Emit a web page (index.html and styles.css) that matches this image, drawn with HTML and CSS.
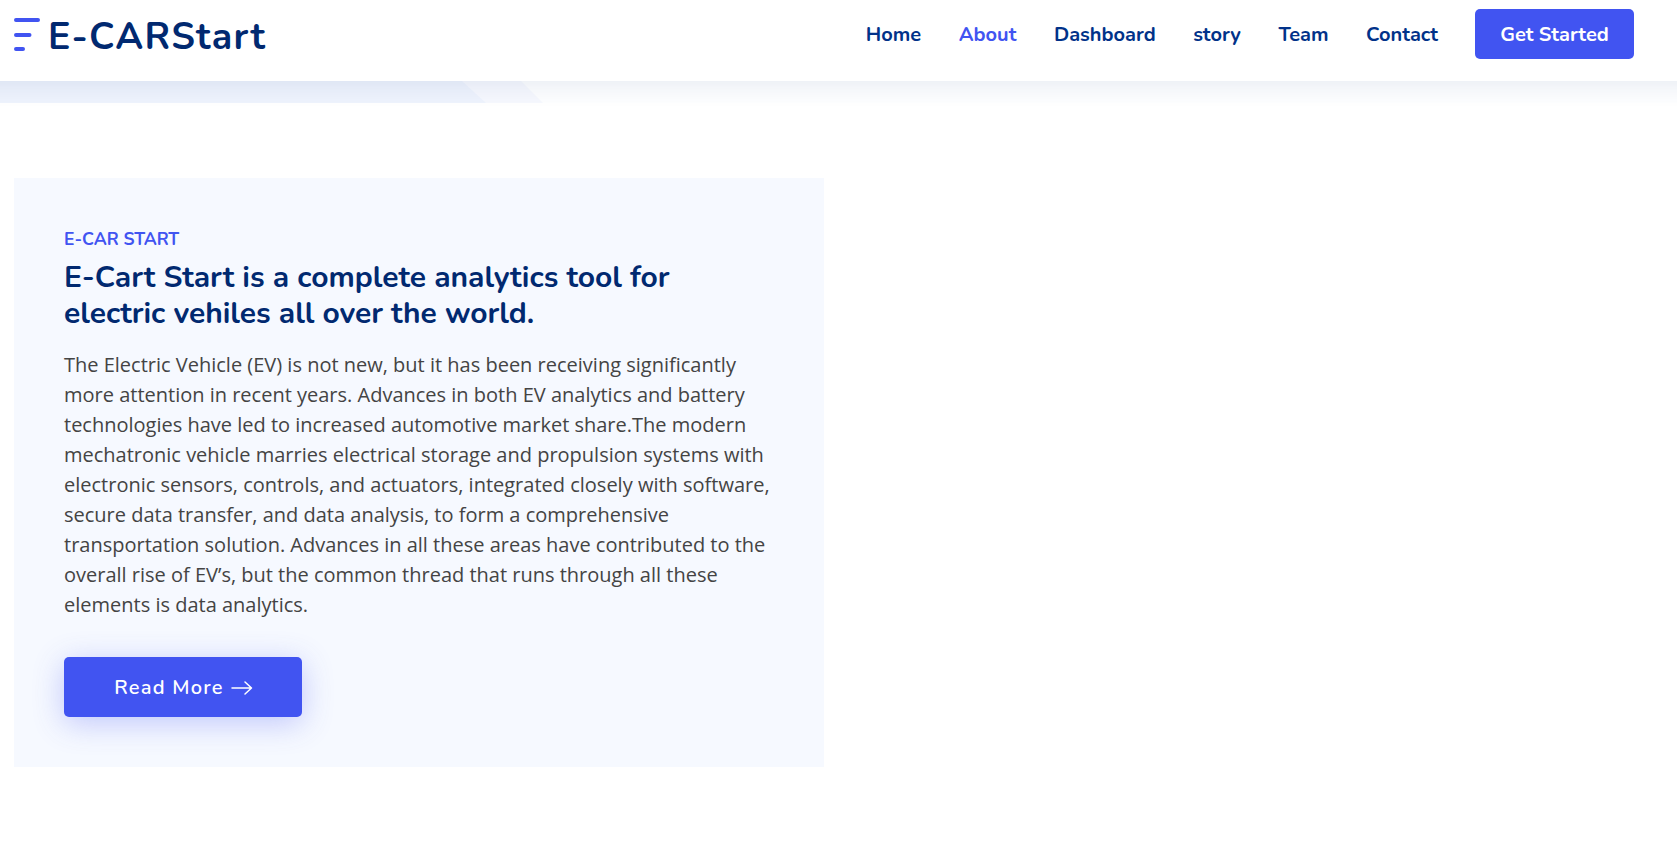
FILE: index.html
```html
<!DOCTYPE html>
<html lang="en">
<head>
<meta charset="utf-8">
<title>E-CARStart</title>
<link rel="stylesheet" href="styles.css">
</head>
<body>
<header class="header">
  <a class="logo">
    <svg class="logo-mark" width="26" height="34" viewBox="0 0 26 34"><g stroke="#4154f1" stroke-width="4" stroke-linecap="round"><path d="M2 2H24M2 17H15.500M2 31H9"/></g></svg>
    <span class="logo-text">E-CARStart</span>
  </a>
  <nav class="nav">
    <a class="nav-link">Home</a>
    <a class="nav-link active">About</a>
    <a class="nav-link">Dashboard</a>
    <a class="nav-link">story</a>
    <a class="nav-link">Team</a>
    <a class="nav-link">Contact</a>
    <a class="get-started">Get Started</a>
  </nav>
</header>
<main>
  <section class="hero-strip">
    <svg width="600" height="22" viewBox="0 0 600 22"><path fill="#f6f8fe" d="M0 0H521L543 22H0Z"/><path fill="#eef3fd" d="M0 0H462L486 22H0Z"/></svg>
  </section>
  <section class="about">
    <div class="card">
      <h3 class="eyebrow">E-CAR START</h3>
      <h2 class="title">E-Cart Start is a complete analytics tool for electric vehiles all over the world.</h2>
      <p class="copy">The Electric Vehicle (EV) is not new, but it has been receiving significantly more attention in recent years. Advances in both EV analytics and battery technologies have led to increased automotive market share.The modern mechatronic vehicle marries electrical storage and propulsion systems with electronic sensors, controls, and actuators, integrated closely with software, secure data transfer, and data analysis, to form a comprehensive transportation solution. Advances in all these areas have contributed to the overall rise of EV’s, but the common thread that runs through all these elements is data analytics.</p>
      <a class="read-more"><span>Read More</span>
        <svg class="arrow" width="22" height="16" viewBox="0 0 22 16"><path d="M1 8H20M14 2L20.500 8L14 14" fill="none" stroke="#fff" stroke-width="1.500" stroke-linecap="round" stroke-linejoin="round"/></svg>
      </a>
    </div>
  </section>
</main>
</body>
</html>
```
FILE: styles.css
```css
* { box-sizing: border-box; }
body { margin: 0; overflow-x: hidden; background: #fff; color: #444; font-family: "Open Sans", sans-serif; font-size: 20px; line-height: 30px; }
h2, h3, p { margin: 0; }
.header { position: relative; z-index: 1; display: flex; justify-content: space-between; height: 81px; margin: 0 -40px; padding: 9px 83px 0 54px; background: #fff; box-shadow: 0 2.5px 25px rgba(1, 41, 112, 0.1); font-family: Nunito, Lato, sans-serif; }
.logo { display: flex; gap: 8px; height: 50px; }
.logo-mark { margin-top: 9px; }
.logo-text { padding-top: 3px; color: #012970; font-size: 37.5px; font-weight: 700; line-height: 50px; letter-spacing: 1.25px; }
.nav { display: flex; align-items: center; height: 50px; gap: 37.5px; }
.nav-link { padding: 1px 0 0 0.5px; margin-right: -0.5px; color: #013289; font-weight: 700; white-space: nowrap; }
.nav-link.active { color: #4154f1; }
.get-started { width: 159px; height: 50px; padding-top: 1px; border-radius: 5px; background: #4154f1; color: #fff; font-weight: 700; line-height: 50px; text-align: center; }
.hero-strip { height: 22px; background: #fdfeff; }
.hero-strip svg { display: block; }
.about { display: flex; padding: 75px 14px; }
.card { width: 810px; height: 589px; padding: 51px 50px 50px; background: #f6f9ff; }
.eyebrow { color: #4154f1; font-family: Nunito, Lato, sans-serif; font-size: 17.5px; font-weight: 700; line-height: 21px; }
.title { margin-top: 10px; color: #012970; font-family: Nunito, Lato, sans-serif; font-size: 30px; font-weight: 700; line-height: 36px; }
.copy { margin-top: 18px; }
.read-more { display: flex; align-items: center; justify-content: center; gap: 7.5px; width: 238px; height: 60px; margin-top: 37px; padding: 1px 0 0 1.5px; border-radius: 5px; background: #4154f1; box-shadow: 0 6px 31px rgba(65, 84, 241, 0.3); color: #fff; font-family: Nunito, Lato, sans-serif; font-weight: 600; letter-spacing: 1.25px; }
.read-more span { padding-top: 1px; }
```
